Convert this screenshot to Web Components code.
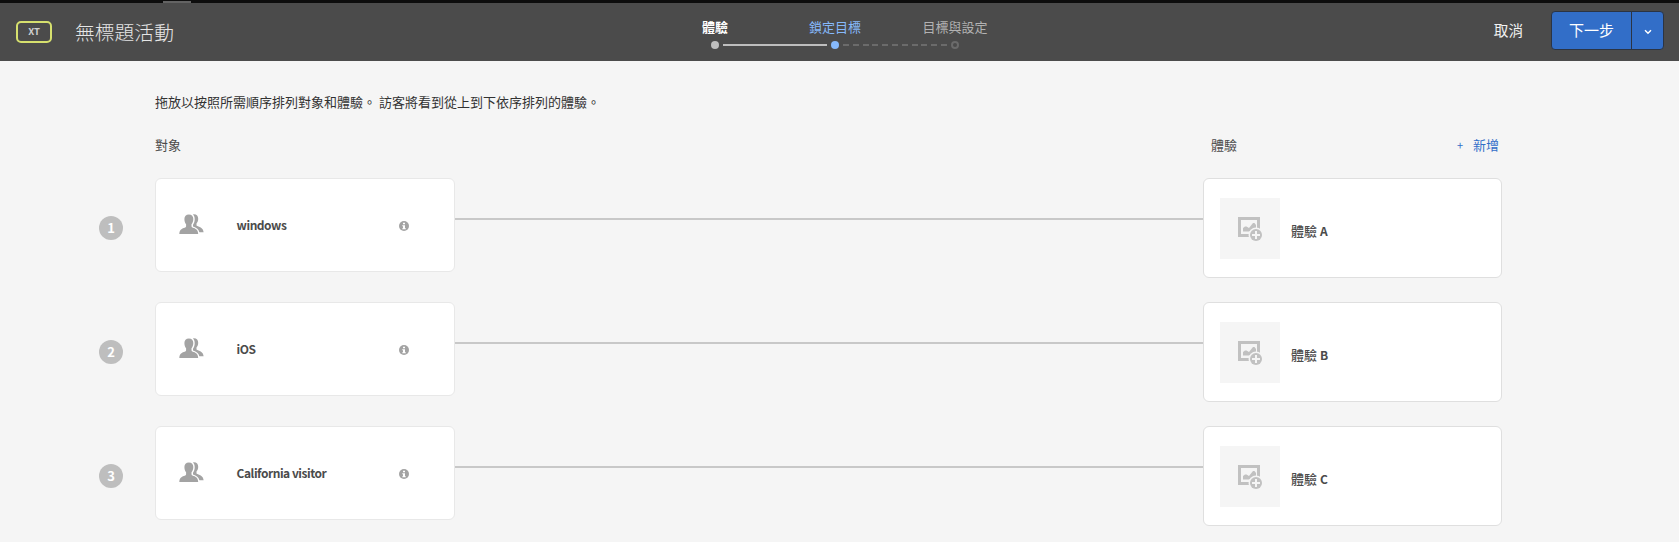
<!DOCTYPE html>
<html lang="zh-Hant">
<head>
<meta charset="utf-8">
<title>無標題活動</title>
<style>
html,body{margin:0;height:100%;overflow:hidden;background:#f5f5f5}
body{font:13px/20px "Noto Sans CJK TC","Noto Sans",sans-serif;color:#4b4b4b}
</style>
</head>
<body>
<activity-page></activity-page>
<script>
function define(name, html) {
  customElements.define(name, class extends HTMLElement {
    constructor() {
      super();
      const t = document.createElement('template');
      t.innerHTML = html;
      this.attachShadow({mode: 'open'}).append(t.content.cloneNode(true));
    }
  });
}

define('step-item', `<style>
:host{display:flex;flex-direction:column;align-items:center;width:120px;font-size:13px;line-height:20px;white-space:nowrap;color:var(--label)}
.track{display:flex;align-items:center;width:120px;height:8px;margin-top:4px}
i{flex:1;height:2px}
.before{background:var(--before,none);margin-right:4px}
.after{background:var(--after,none);margin-left:4px}
b{box-sizing:border-box;width:8px;height:8px;border-radius:50%;background:var(--dot);border:var(--ring,0)}
</style><slot></slot><div class="track"><i class="before"></i><b></b><i class="after"></i></div>`);

define('step-list', `<style>
:host{display:flex}
.done{--label:#fff;--dot:#bebebe;--after:#bebebe;font-weight:700}
.now{--label:#86b9fb;--dot:#86b9fb;--before:#bebebe;--after:repeating-linear-gradient(90deg,#6b6b6b 0 6px,transparent 6px 9.8px)}
.todo{--label:#b2b2b2;--dot:transparent;--ring:2px solid #6b6b6b;--before:repeating-linear-gradient(90deg,#6b6b6b 0 3px,transparent 3px 6.8px,#6b6b6b 6.8px 9.8px)}
</style><step-item class="done">體驗</step-item><step-item class="now">鎖定目標</step-item><step-item class="todo">目標與設定</step-item>`);

define('split-button', `<style>
:host{display:flex;box-sizing:border-box;width:113px;height:39px;border:1px solid #2b3444;border-radius:4px;background:#326ec8;color:#fff;font-size:15px;line-height:36px;overflow:hidden}
.main{width:79px;text-align:center}
.more{flex:1;border-left:1px solid #2b3444;display:flex;align-items:center;justify-content:center}
svg{margin:2px 0 0 0}
</style><div class="main"><slot></slot></div><div class="more"><svg width="8" height="6" viewBox="0 0 8 6"><path d="M1 1.3 4 4.2 7 1.3" fill="none" stroke="#fff" stroke-width="1.5"/></svg></div>`);

define('top-bar', `<style>
:host{display:block;background:#4b4b4b;height:61px}
.strip{height:3px;background:#0d0d0d;display:flex;align-items:flex-end}
.strip i{width:28px;height:2px;margin-left:163px;background:#636363}
.bar{display:grid;grid-template-columns:655px 360px 1fr;height:58px}
.left{display:flex;align-items:center}
.badge{box-sizing:border-box;width:36px;height:22px;margin:-1px 23px 0 16px;border:2px solid #d6e06e;border-radius:5px;color:#d0d0d0;font-weight:700;font-size:9.5px;line-height:17px;text-align:center}
.title{font-size:19.8px;line-height:28px;color:#e6e6e6;font-weight:300}
step-list{margin-top:14px}
.right{display:flex;justify-content:flex-end;padding:8px 15px 0 0}
.cancel{font-size:14.6px;line-height:38px;color:#f2f2f2;margin-right:28px}
</style><div class="strip"><i></i></div><div class="bar"><div class="left"><div class="badge">XT</div><div class="title">無標題活動</div></div><step-list></step-list><div class="right"><span class="cancel">取消</span><split-button>下一步</split-button></div></div>`);

define('audience-card', `<style>
:host{box-sizing:border-box;display:flex;align-items:center;width:300px;height:94px;background:#fff;border:1px solid #e8e8e8;border-radius:6px;font-weight:700;font-size:12px;letter-spacing:-.48px;color:#4b4b4b}
.people{margin:-2px 0 0 23px}
.name{width:162px;margin:-1px 0 0 32.6px;white-space:nowrap}
.info{margin-top:2px}
</style><svg class="people" width="25" height="21" viewBox="0 0 25 21" fill="#a3a3a3"><path d="M9.900.5c2.900 0 4.400 1.800 4.400 4.600 0 2.100-.7 4-1.800 5.200v2c0 .7.300 1 .9 1.200 3.400 1 5.600 2.300 5.800 6.500H.3c.2-4.200 2.500-5.500 5.900-6.500.6-.2.900-.5.900-1.200v-2C6 9.100 5.400 7.200 5.400 5.100 5.400 2.300 7 .5 9.900.5z"/><path d="M14 .4c3.500-.4 5.200 1.500 5.200 4.400 0 2-.7 3.700-1.700 4.800v1.300c0 .6.200.9.800 1.100 3.500 1.300 6 2.400 6.300 6.200h-4.200c-.7-3.100-2.800-4.700-6.400-5.800v-1.600c1.100-1.500 1.700-3.600 1.700-5.600 0-2.100-.5-3.700-1.700-4.800z"/></svg><span class="name"><slot></slot></span><svg class="info" width="10" height="10" viewBox="0 0 10 10"><circle cx="5" cy="5" r="5" fill="#a3a3a3"/><path d="M4 1.700h2v1.500H4zM3.300 4.200H6v3h.8v1H3.300v-1H4v-2h-.7z" fill="#fff"/></svg>`);

define('experience-card', `<style>
:host{box-sizing:border-box;display:flex;width:299px;height:100px;background:#fff;border:1px solid #dfdfdf;border-radius:6px;font-weight:500;font-size:13px;color:#4b4b4b}
.thumb{width:60px;height:61px;margin:19px 11px 0 16px;background:#f5f5f5;display:flex}
svg{margin:18px 0 0 17px}
.name{margin-top:42px}
</style><div class="thumb"><svg width="26" height="26" viewBox="0 0 26 26"><path d="M2.500 2.500h19v17h-19z" fill="none" stroke="#c1c1c1" stroke-width="3"/><path d="M6 15.500V12l2-1.500h1.500L12 12l4-5h1.500L19 9v3l-7 3.500z" fill="#c1c1c1"/><circle cx="19" cy="19" r="7.500" fill="#f5f5f5"/><circle cx="19" cy="19" r="6" fill="#c1c1c1"/><path d="M19 15v8M15 19h8" stroke="#f5f5f5" stroke-width="2"/></svg></div><span class="name"><slot></slot></span>`);

define('flow-row', `<style>
:host{display:flex;height:124px;align-items:flex-start}
.num{width:24px;height:24px;margin:38px 32px 0 99px;border-radius:50%;background:#bebebe;color:#fff;font-weight:700;font-size:13px;line-height:24px;text-align:center}
.line{width:748px;height:2px;margin-top:40px;background:#c8c8c8}
</style><div class="num"><slot name="num"></slot></div><slot name="audience"></slot><div class="line"></div><slot name="experience"></slot>`);

define('activity-page', `<style>
:host{display:block}
.hint{margin:31px 0 0 155px;color:#323232;white-space:pre}
.head{display:flex;margin:23px 0 23px 155px}
.exp{margin-left:1030px}
.add{margin-left:220px;color:#326ec8;display:flex;gap:9px}
.add span:first-child{width:7px;font-size:11px}
b{font-size:12px;font-weight:700}
</style><top-bar></top-bar>
<div class="hint">拖放以按照所需順序排列對象和體驗。 訪客將看到從上到下依序排列的體驗。</div>
<div class="head"><span>對象</span><span class="exp">體驗</span><div class="add"><span>+</span><span>新增</span></div></div>
<flow-row><span slot="num">1</span><audience-card slot="audience">windows</audience-card><experience-card slot="experience">體驗 <b>A</b></experience-card></flow-row>
<flow-row><span slot="num">2</span><audience-card slot="audience">iOS</audience-card><experience-card slot="experience">體驗 <b>B</b></experience-card></flow-row>
<flow-row><span slot="num">3</span><audience-card slot="audience">California visitor</audience-card><experience-card slot="experience">體驗 <b>C</b></experience-card></flow-row>`);
</script>
</body>
</html>
